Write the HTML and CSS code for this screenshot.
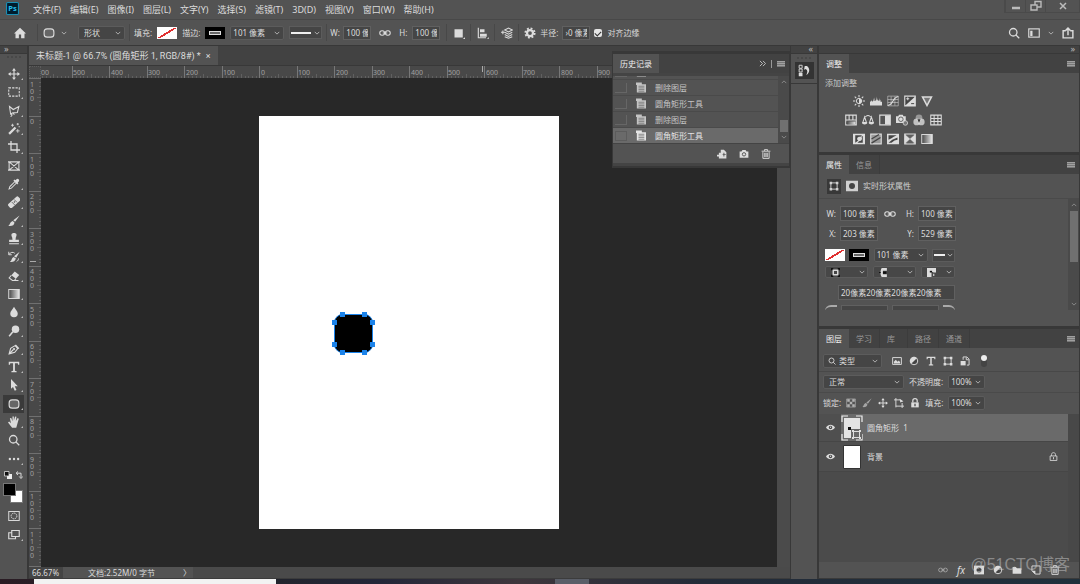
FILE: index.html
```html
<!DOCTYPE html>
<html lang="zh-CN">
<head>
<meta charset="utf-8">
<title>未标题-1 @ 66.7%</title>
<link rel="stylesheet" href="styles.css">
</head>
<body>
<svg class="sprite" aria-hidden="true">
  <symbol id="home" viewBox="0 0 16 16"><path fill="currentColor" d="M8 1 0 8.500h2V15h4.500v-5h3v5H14V8.500h2z"/></symbol>
  <symbol id="rrect" viewBox="0 0 16 16"><rect x="1.500" y="2.500" width="13" height="11" rx="4" fill="#666" stroke="currentColor" stroke-width="1.500"/></symbol>
  <symbol id="chev" viewBox="0 0 8 8"><path d="M1 2.500 4 5.500 7 2.500" fill="none" stroke="currentColor" stroke-width="1.300"/></symbol>
  <symbol id="link" viewBox="0 0 16 16"><g fill="none" stroke="currentColor" stroke-width="1.400"><rect x="1" y="5" width="6.500" height="6" rx="3"/><rect x="8.500" y="5" width="6.500" height="6" rx="3"/><path d="M5 8h6"/></g></symbol>
  <symbol id="square" viewBox="0 0 16 16"><path fill="currentColor" d="M2 3h11v11H2zM13 16l3-2.500V16z"/></symbol>
  <symbol id="align" viewBox="0 0 16 16"><path fill="currentColor" d="M1 1h1.500v14H1zM4 3h6v4H4zM4 9h9v4H4zM1 13.500h11V15H1zM13 15.500l3-2v2z"/></symbol>
  <symbol id="stack" viewBox="0 0 16 16"><g fill="none" stroke="currentColor" stroke-width="1.400"><path d="M5 4l5-2.500L15 4l-5 2.500zM5 7l5 2.500L15 7M5 10l5 2.500 5-2.500M5 13l5 2 5-2M0 7h5M2.500 4.500v5"/></g></symbol>
  <symbol id="gear" viewBox="0 0 16 16"><circle cx="8" cy="8" r="4" fill="none" stroke="currentColor" stroke-width="3"/><circle cx="8" cy="8" r="6.200" fill="none" stroke="currentColor" stroke-width="2.500" stroke-dasharray="2.500 2.370"/></symbol>
  <symbol id="search" viewBox="0 0 16 16"><g fill="none" stroke="currentColor" stroke-width="1.700"><circle cx="7" cy="7" r="5"/><path d="M10.500 10.500 15 15"/></g></symbol>
  <symbol id="work" viewBox="0 0 16 16"><rect x="1" y="2.500" width="14" height="11" fill="none" stroke="currentColor" stroke-width="1.500"/><path fill="currentColor" d="M3 5h3v7H3z"/></symbol>
  <symbol id="share" viewBox="0 0 16 16"><path d="M5 5H1.500v9.500h13V5H11M8 11V2M5 4.500 8 1.500l3 3" fill="none" stroke="currentColor" stroke-width="1.900"/></symbol>
  <symbol id="menu" viewBox="0 0 8 8"><path fill="#777" d="M0 1h8v6H0z"/><path fill="currentColor" d="M0 1h8v1H0zM0 3h8v1H0zM0 5h8v1H0z"/></symbol>
  <symbol id="move" viewBox="0 0 16 16"><path d="M8 2v12M2 8h12" stroke="currentColor" stroke-width="1.500"/><path fill="currentColor" d="M8 0l2.600 3.500H5.400zM8 16l2.600-3.500H5.400zM0 8l3.500-2.600v5.200zM16 8l-3.500-2.600v5.200z"/></symbol>
  <symbol id="marquee" viewBox="0 0 16 16"><rect x="1" y="2.500" width="14" height="11" fill="none" stroke="currentColor" stroke-width="1.400" stroke-dasharray="3 1.500"/></symbol>
  <symbol id="lasso" viewBox="0 0 16 16"><path d="M2 2l5 4 7.500-4-2 8-6 .500-3 1.500zM3.500 12c2.500 0 2.500 2 0 3.500M6.500 10.500l2 2.500" fill="none" stroke="currentColor" stroke-width="1.400"/></symbol>
  <symbol id="wand" viewBox="0 0 16 16"><path d="M1.500 14.500 10 6" stroke="currentColor" stroke-width="3"/><path d="M6 1v4M4 3h4M13 0v3M11.500 1.500h3M13 8v5M10.500 10.500h5M14 5h2" stroke="currentColor" stroke-width="1.100"/></symbol>
  <symbol id="crop" viewBox="0 0 16 16"><path d="M4 0v12h12M0 4h12v12" fill="none" stroke="currentColor" stroke-width="1.700"/></symbol>
  <symbol id="frame" viewBox="0 0 16 16"><path d="M1.500 2.500h13v11h-13zM1.500 2.500l13 11M14.500 2.500l-13 11M0 2.500h16M0 13.500h16" fill="none" stroke="currentColor" stroke-width="1.400"/></symbol>
  <symbol id="dropper" viewBox="0 0 16 16"><path fill="currentColor" d="M10 3l1-1c2-2.500 5.500 1 3 3l-1 1 .800 1-1.600 1.600-5-5L8.800 2z"/><path d="M9 5 2.500 11.500 1.500 14.500l3-1L11 7" fill="none" stroke="currentColor" stroke-width="1.400"/></symbol>
  <symbol id="heal" viewBox="0 0 16 16"><rect x="-1" y="5" width="18" height="7" rx="2" transform="rotate(-42 8 8)" fill="currentColor"/><path d="M5 8l4 4M8 4.500l4 4" stroke="#535353"/><circle cx="8.500" cy="8" r="1" fill="#535353"/></symbol>
  <symbol id="brush" viewBox="0 0 16 16"><path fill="currentColor" d="M15.500.500 9.500 9 7 7zM6.300 8l2.300 2c0 4-3.600 5-8.100 4.500 2.500-1.500 2-5.500 5.800-6.500z"/></symbol>
  <symbol id="stamp" viewBox="0 0 16 16"><path fill="currentColor" d="M8 0c4 0 4 3 2.500 5.500L10 9h4.500v3h-13V9H6l-.500-3.500C4 3 4 0 8 0zM1.500 13.500h13V15h-13z"/></symbol>
  <symbol id="hbrush" viewBox="0 0 16 16"><path fill="currentColor" d="M15.500 1 11 9 8 7zM7.500 8l3 2c-1 4-4 5-8 4.500 3-1.500 2-5.500 5-6.500z"/><path d="M1 1v4h4M1.500 4.500C3 1.500 7 1 9 3M14 10c0 2-1 3-2.500 4" fill="none" stroke="currentColor" stroke-width="1.300"/></symbol>
  <symbol id="eraser" viewBox="0 0 16 16"><path fill="currentColor" d="M9 2l6 4.500-4.500 5-6-4.500z"/><path d="M4.500 7 1.500 10.500 6 14h2.500l2-2.500M5 14h9" fill="none" stroke="currentColor" stroke-width="1.400"/></symbol>
  <linearGradient id="fade"><stop offset="0" stop-color="#444"/><stop offset="1" stop-color="#e8e8e8"/></linearGradient>
  <symbol id="grad" viewBox="0 0 16 16"><rect x="1" y="2" width="14" height="12" fill="url(#fade)" stroke="currentColor" stroke-width="1.300"/></symbol>
  <symbol id="drop" viewBox="0 0 16 16"><path fill="currentColor" d="M8 1c1.500 3 5 6 5 9a5 5 0 0 1-10 0c0-3 3.500-6 5-9z"/></symbol>
  <symbol id="dodge" viewBox="0 0 16 16"><circle cx="10" cy="5.500" r="5" fill="currentColor"/><path d="M6.500 9 1.500 15" stroke="currentColor" stroke-width="2"/></symbol>
  <symbol id="pen" viewBox="0 0 16 16"><path d="M1.500 14.500 3.500 7l6-3.500 3.500 4L9 12.500zM1.500 14.500 7 9M10 2.500l4.500 5" fill="none" stroke="currentColor" stroke-width="1.500"/><circle cx="8" cy="8" r="1.500" fill="currentColor"/></symbol>
  <symbol id="type" viewBox="0 0 16 16"><path fill="currentColor" d="M1 1h14v4h-1.500L13 3H9.200v10l2.300.700V15h-7v-1.300l2.300-.700V3H3l-.500 2H1z"/></symbol>
  <symbol id="arrow" viewBox="0 0 16 16"><path fill="currentColor" d="M4 0l9 9.500H9l2.300 5-2.300 1-2.300-5L4 13z"/></symbol>
  <symbol id="hand" viewBox="0 0 16 16"><path fill="currentColor" d="M5.500 15.500 0 8.500l1.500-1.200L4 9.500 2.500 3 4.300 2.500 6 7V.500h1.800V6L9.500.700l1.700.4-.7 5.600 2.300-4 1.600.8-1.700 6-1.700 6z"/></symbol>
  <symbol id="dots" viewBox="0 0 16 16"><g fill="currentColor"><circle cx="2.500" cy="8" r="1.600"/><circle cx="8" cy="8" r="1.600"/><circle cx="13.500" cy="8" r="1.600"/></g></symbol>
  <symbol id="defcol" viewBox="0 0 8 8"><path fill="#eee" d="M3 3h5v5H3z"/><path fill="#111" stroke="#ddd" stroke-width=".8" d="M.5.500h4.500v4.500H.5z"/></symbol>
  <symbol id="swap" viewBox="0 0 8 8"><path fill="none" stroke="currentColor" d="M2 2.200h4v4M3 .5 1 2.200 3 4M4.300 5.500 6 7.500l1.700-2"/></symbol>
  <symbol id="mask" viewBox="0 0 16 16"><rect x="1" y="2" width="14" height="12" fill="none" stroke="currentColor" stroke-width="1.300"/><circle cx="8" cy="8" r="3.800" fill="none" stroke="currentColor" stroke-width="1.300" stroke-dasharray="2 .8"/></symbol>
  <symbol id="screen" viewBox="0 0 16 16"><path d="M5 2h10v8H5zM5 5H1v8h9v-3" fill="none" stroke="currentColor" stroke-width="1.500"/></symbol>
  <symbol id="doc" viewBox="0 0 12 12"><path fill="currentColor" d="M0 0h7v2h5v10H1V3H0z"/><path d="M3 4.500h7M3 6.500h7M3 8.500h7M3 10.500h7" stroke="#777"/></symbol>
  <symbol id="newdoc" viewBox="0 0 16 16"><path fill="currentColor" d="M6 1h5l4 4v10H5V9h1zM0 9h3V6h3v3h3v3H6v3H3v-3H0z"/><path fill="#535353" d="M9 8h1.300V6h1.500v2H14v1.300h-2.200V12h-1.500V9.300H9z"/></symbol>
  <symbol id="camera" viewBox="0 0 16 16"><path fill="currentColor" d="M1 4h3l1.500-2.500h5L12 4h3v10H1z"/><circle cx="8" cy="8.500" r="2.700" fill="none" stroke="#535353" stroke-width="1.500"/></symbol>
  <symbol id="trash" viewBox="0 0 16 16"><path fill="none" stroke="currentColor" stroke-width="1.500" d="M3 5v10h10V5M1 3.500h14M5.500 3V1h5v2M6 6v7M8 6v7M10 6v7"/></symbol>
  <symbol id="history" viewBox="0 0 16 16"><path fill="none" stroke="currentColor" stroke-width="1.200" d="M1.500 1h4v4h-4zM1.500 6h4v4h-4z"/><path fill="currentColor" d="M1 11h5v4.500H1zM9 2h3c5 4 3 10-1 12 2-4 2-7-1-8L8 7z"/></symbol>
  <symbol id="bright" viewBox="0 0 16 16"><circle cx="8" cy="8" r="3.500" fill="none" stroke="currentColor" stroke-width="1.300"/><path fill="currentColor" d="M8 4.500a3.500 3.500 0 0 1 0 7z"/><path stroke="currentColor" stroke-width="1.400" d="M8 0v3M8 13v3M0 8h3M13 8h3M2.300 2.300l2 2M11.700 11.700l2 2M2.300 13.700l2-2M11.700 4.300l2-2"/></symbol>
  <symbol id="levels" viewBox="0 0 16 16"><path fill="currentColor" d="M0 14V9l2-1V6l1 3 1-1V4l1 4 1 0V3l1 5 1-1V2l1 5h1V4l1 4 1-1V4l1 4 1-2v3l2 0v5z"/></symbol>
  <symbol id="curves" viewBox="0 0 16 16"><path d="M1 1.500h14v13H1zM1 6h14M1 10h14M5.500 2v12M10.500 2v12" fill="none" stroke="currentColor" opacity=".7"/><path d="M1 14C9 13 7 3 15 2" fill="none" stroke="currentColor" stroke-width="1.500"/></symbol>
  <symbol id="expo" viewBox="0 0 16 16"><path fill="#444" stroke="currentColor" stroke-width="1.500" d="M1 1.500h14v13H1z"/><path fill="currentColor" d="M15 2v12.500H1z"/><path stroke="currentColor" stroke-width="1.300" d="M3 5h4M5 3v4"/><path stroke="#444" stroke-width="1.300" d="M9.500 11.500h4"/></symbol>
  <symbol id="vib" viewBox="0 0 16 16"><path fill="#777" stroke="currentColor" stroke-width="2" d="M2 2.500h12L8 14z"/></symbol>
  <symbol id="hue" viewBox="0 0 16 16"><path fill="none" stroke="currentColor" stroke-width="1.500" d="M1 1.500h14v13H1zM1 8h14M5.500 2v6M10.500 2v6"/><path fill="url(#fade)" d="M2 10h12v4H2z"/></symbol>
  <symbol id="scale" viewBox="0 0 16 16"><path fill="none" stroke="currentColor" stroke-width="1.400" d="M3 4c3 0 2-2 5-2s2 2 5 2M3.500 4 1 11.500h5zM12.500 4 10 11.500h5z"/><path fill="currentColor" d="M0 11h7c0 4-7 4-7 0zM9 11h7c0 4-7 4-7 0z"/></symbol>
  <symbol id="bw" viewBox="0 0 16 16"><path fill="none" stroke="currentColor" stroke-width="1.500" d="M1 1.500h14v13H1z"/><path fill="currentColor" d="M8 2h7v12H8z"/></symbol>
  <symbol id="photo" viewBox="0 0 16 16"><path fill="currentColor" d="M0 3h3l1-2h5l1 2h3v9H0z"/><circle cx="6.500" cy="7" r="3" fill="none" stroke="#444"/><circle cx="12.500" cy="12" r="3" fill="#777" stroke="currentColor"/></symbol>
  <symbol id="mixer" viewBox="0 0 16 16"><g fill="currentColor"><circle cx="8" cy="5" r="4.500" opacity=".5"/><circle cx="5" cy="10.500" r="4.500" opacity=".8"/><circle cx="11" cy="10.500" r="4.500" opacity=".8"/></g><path fill="#333" d="M6 7h4l-2 5z"/></symbol>
  <symbol id="grid" viewBox="0 0 16 16"><path fill="none" stroke="currentColor" stroke-width="1.400" d="M1 1.500h14v13H1zM1 6h14M1 10h14M5.500 2v12M10.500 2v12"/></symbol>
  <symbol id="invert" viewBox="0 0 16 16"><path fill="currentColor" d="M0 1h16v14H0z"/><path fill="#444" d="M3 3h9l-2 2C6 4 4 8 7 10l-4 3zM13 13H6l2-2c4 0 5-4 3-6l2-1z"/></symbol>
  <symbol id="poster" viewBox="0 0 16 16"><path fill="#999" stroke="currentColor" stroke-width="1.500" d="M1 1.500h14v13H1z"/><path stroke="#444" stroke-width="1.800" d="M2 8l10-6M2 13.500 14 6"/></symbol>
  <symbol id="thresh" viewBox="0 0 16 16"><path fill="currentColor" d="M0 1h16v14H0z"/><path fill="#444" d="M2 3h11L9 5 6 7 2 9zM14 6v3l-4 1-4 3H2l5-4z"/></symbol>
  <symbol id="select" viewBox="0 0 16 16"><path fill="#888" stroke="currentColor" stroke-width="1.500" d="M1 1.500h14v13H1z"/><path fill="#444" d="M2 2l6 5 6-5zM8 8l-5 6h10z" opacity=".6"/><path fill="currentColor" d="M1 2l7 6-7 6zM15 2 8 8l7 6z"/></symbol>
  <symbol id="box" viewBox="0 0 16 16"><path fill="none" stroke="currentColor" stroke-width="1.500" d="M3 3h10v10H3z"/><path fill="currentColor" d="M1 1h4v4H1zM11 1h4v4h-4zM1 11h4v4H1zM11 11h4v4h-4z"/></symbol>
  <symbol id="fmask" viewBox="0 0 16 16"><path fill="currentColor" d="M0 1h16v14H0z"/><circle cx="8" cy="8" r="4" fill="#444"/></symbol>
  <symbol id="salign" viewBox="0 0 16 16"><path fill="#111" d="M0 0h4v4H0zM12 0h4v4h-4zM0 12h4v4H0zM12 12h4v4h-4z"/><rect x="4" y="4" width="8" height="8" fill="#444" stroke="currentColor" stroke-width="2.500"/></symbol>
  <symbol id="cap" viewBox="0 0 16 16"><path fill="currentColor" d="M5 0h9v5H7v6h7v5H5c-3-2-3-13 0-16z"/><path fill="#111" d="M7 6h6v4H7zM0 7h3v2H0z"/></symbol>
  <symbol id="corner" viewBox="0 0 16 16"><path fill="currentColor" d="M0 0h16v8h-5V7H8v9H0z"/><path fill="#111" d="M5 5h4v3H5z"/><path stroke="currentColor" stroke-width="2" d="M12 10v4"/></symbol>
  <symbol id="picture" viewBox="0 0 16 16"><path fill="none" stroke="currentColor" stroke-width="1.500" d="M1 2.500h14v11H1z"/><path fill="currentColor" d="M3 12V9l3-3 3 3 2-2 2 3v2z"/></symbol>
  <symbol id="half" viewBox="0 0 16 16"><circle cx="8" cy="8" r="6" fill="#444" stroke="currentColor" stroke-width="1.500"/><path fill="currentColor" d="M3.500 12.500A6 6 0 0 1 12.500 3.500z"/></symbol>
  <symbol id="smart" viewBox="0 0 16 16"><path fill="none" stroke="currentColor" stroke-width="1.500" d="M5 6V1.500h6L14.500 5v9.500H11M10 2v4h4"/><path fill="currentColor" d="M1 8h8v7H1z"/></symbol>
  <symbol id="check" viewBox="0 0 16 16"><path fill="none" stroke="currentColor" opacity=".7" d="M1 1.500h14v13H1z"/><path fill="currentColor" opacity=".7" d="M2 2h4v4H2zM10 2h4v4h-4zM6 6h4v4H6zM2 10h4v4H2zM10 10h4v4h-4z"/></symbol>
  <symbol id="artb" viewBox="0 0 16 16"><path fill="none" stroke="currentColor" stroke-width="1.500" d="M3 0v15M0 3h10M13 8v8M3 13h13M10 3l3 3"/><path fill="currentColor" d="M9 1l6 4-5 2z"/></symbol>
  <symbol id="lock" viewBox="0 0 16 16"><path fill="currentColor" d="M2 7h12v8H2z"/><path fill="none" stroke="currentColor" stroke-width="2" d="M4.500 7V4.500C4.500 0 11.500 0 11.500 4.500V7"/><path fill="#444" d="M7 9h2v4H7z"/></symbol>
  <symbol id="olock" viewBox="0 0 16 16"><path fill="none" stroke="currentColor" stroke-width="1.500" d="M2 7h12v8H2zM4.500 7V4.500C4.500 0 11.500 0 11.500 4.500V7M8 9v4"/></symbol>
  <symbol id="eye" viewBox="0 0 16 16"><path fill="currentColor" d="M0 8c4-6.500 12-6.500 16 0-4 6.500-12 6.500-16 0z"/><circle cx="8" cy="8" r="3" fill="#444"/><circle cx="8" cy="7.500" r="1.200" fill="currentColor"/></symbol>
  <symbol id="folder" viewBox="0 0 16 16"><path fill="currentColor" d="M1 3h5l2 2h7v9H1z"/></symbol>
  <symbol id="newl" viewBox="0 0 16 16"><path fill="none" stroke="currentColor" stroke-width="1.500" d="M7 14.500h7.500v-13h-13V9z"/><path fill="currentColor" d="M1 9h6v6z"/></symbol>
</svg>

<header class="menubar">
  <svg class="logo" viewBox="0 0 12 12" role="img" aria-label="Ps"><rect x=".5" y=".5" width="11" height="11" rx="1" fill="#001d2e" stroke="#1a8fb5"/><text x="6" y="8.500" text-anchor="middle">Ps</text></svg>
  <nav>
    <a href="#">文件(F)</a><a href="#">编辑(E)</a><a href="#">图像(I)</a><a href="#">图层(L)</a><a href="#">文字(Y)</a><a href="#">选择(S)</a><a href="#">滤镜(T)</a><a href="#">3D(D)</a><a href="#">视图(V)</a><a href="#">窗口(W)</a><a href="#">帮助(H)</a>
  </nav>
  <div class="winctl">
    <button aria-label="最小化"><svg viewBox="0 0 12 12"><path d="M2 8h8" stroke="#bbb" stroke-width="2.500"/></svg></button>
    <button aria-label="还原"><svg viewBox="0 0 12 12"><path d="M1 5h6v5H1zM5 5V1.500h6V7H7" fill="none" stroke="#bbb" stroke-width="1.400"/></svg></button>
    <button aria-label="关闭"><svg viewBox="0 0 12 12"><path d="M3 3l6 6M9 3 3 9" stroke="#bbb" stroke-width="1.500"/></svg></button>
  </div>
</header>

<div class="options">
  <div class="group home"><button aria-label="主页"><svg class="i"><use href="#home"/></svg></button></div>
  <div class="group shape">
    <button aria-label="圆角矩形工具"><svg class="i"><use href="#rrect"/></svg></button>
    <svg class="c"><use href="#chev"/></svg>
    <label class="drop mode"><select aria-label="模式"><option>形状</option></select><svg class="c"><use href="#chev"/></svg></label>
  </div>
  <div class="group paint">
    <span class="lab">填充:</span><button class="sw none" aria-label="填充"></button>
    <span class="lab">描边:</span><button class="sw stroke" aria-label="描边"></button>
    <label class="drop size"><input value="101 像素" aria-label="描边宽度"><svg class="c"><use href="#chev"/></svg></label>
    <button class="linebtn" aria-label="描边类型"><i></i><svg class="c"><use href="#chev"/></svg></button>
  </div>
  <div class="group dims">
    <label for="ow">W:</label><input id="ow" class="clip" value="100 像素">
    <button class="lk" aria-label="链接"><svg class="i"><use href="#link"/></svg></button>
    <label for="oh">H:</label><input id="oh" class="clip" value="100 像素">
  </div>
  <div class="group one"><button aria-label="路径操作"><svg class="i"><use href="#square"/></svg></button></div>
  <div class="group one"><button aria-label="对齐"><svg class="i"><use href="#align"/></svg></button></div>
  <div class="group one"><button aria-label="排列"><svg class="i"><use href="#stack"/></svg></button></div>
  <div class="group rad">
    <button aria-label="设置"><svg class="i"><use href="#gear"/></svg></button>
    <label for="or">半径:</label><input id="or" class="clip" value="›0 像素">
    <label class="chk"><input type="checkbox" checked>对齐边缘</label>
  </div>
  <div class="optright">
    <button aria-label="搜索"><svg class="i"><use href="#search"/></svg></button>
    <button aria-label="工作区"><svg class="i"><use href="#work"/></svg></button>
    <svg class="c"><use href="#chev"/></svg>
    <button aria-label="共享"><svg class="i"><use href="#share"/></svg></button>
  </div>
</div>

<main class="workspace">
  <aside class="tools">
    <div class="strip">»</div>
    <div class="grip"></div>
    <div class="toollist">
      <button aria-label="移动"><svg class="i"><use href="#move"/></svg></button>
      <button aria-label="选框"><svg class="i"><use href="#marquee"/></svg></button>
      <button aria-label="套索"><svg class="i"><use href="#lasso"/></svg></button>
      <button aria-label="魔棒"><svg class="i"><use href="#wand"/></svg></button>
      <button aria-label="裁剪"><svg class="i"><use href="#crop"/></svg></button>
      <button aria-label="图框" class="solo"><svg class="i"><use href="#frame"/></svg></button>
      <button aria-label="吸管"><svg class="i"><use href="#dropper"/></svg></button>
      <button aria-label="修复"><svg class="i"><use href="#heal"/></svg></button>
      <button aria-label="画笔"><svg class="i"><use href="#brush"/></svg></button>
      <button aria-label="图章"><svg class="i"><use href="#stamp"/></svg></button>
      <button aria-label="历史画笔"><svg class="i"><use href="#hbrush"/></svg></button>
      <button aria-label="橡皮擦"><svg class="i"><use href="#eraser"/></svg></button>
      <button aria-label="渐变"><svg class="i"><use href="#grad"/></svg></button>
      <button aria-label="模糊"><svg class="i"><use href="#drop"/></svg></button>
      <button aria-label="减淡"><svg class="i"><use href="#dodge"/></svg></button>
      <button aria-label="钢笔"><svg class="i"><use href="#pen"/></svg></button>
      <button aria-label="文字"><svg class="i"><use href="#type"/></svg></button>
      <button aria-label="路径选择"><svg class="i"><use href="#arrow"/></svg></button>
      <button aria-label="圆角矩形" class="on"><svg class="i"><use href="#rrect"/></svg></button>
      <button aria-label="抓手"><svg class="i"><use href="#hand"/></svg></button>
      <button aria-label="缩放" class="solo"><svg class="i"><use href="#search"/></svg></button>
      <button aria-label="更多"><svg class="i"><use href="#dots"/></svg></button>
    </div>
    <div class="mini"><svg><use href="#defcol"/></svg><svg><use href="#swap"/></svg></div>
    <div class="colors"><button class="bg" aria-label="背景色"></button><button class="fg" aria-label="前景色"></button></div>
    <div class="modes">
      <button class="solo" aria-label="快速蒙版"><svg class="i"><use href="#mask"/></svg></button>
      <button aria-label="屏幕模式"><svg class="i"><use href="#screen"/></svg></button>
    </div>
  </aside>

  <section class="document">
    <div class="tabs"><div class="tab">未标题-1 @ 66.7% (圆角矩形 1, RGB/8#) *<button aria-label="关闭">×</button></div></div>
    <div class="view">
      <div class="corner"></div>
      <svg class="hruler" aria-hidden="true">
        <pattern id="ht" x="31" width="75" height="12" patternUnits="userSpaceOnUse"><path d="M.5 0v12M37.500 0v12" stroke="#777"/><path d="M4.500 10v2M8.500 10v2M11.500 10v2M15.500 10v2M19.500 8v4M23.500 10v2M26.500 10v2M30.500 10v2M34.500 10v2M41.500 10v2M45.500 10v2M49.500 10v2M53.500 10v2M56.500 8v4M60.500 10v2M64.500 10v2M68.500 10v2M71.500 10v2" stroke="#606060"/></pattern>
        <rect width="100%" height="12" fill="url(#ht)"/>
        <path d="M441.500 0v6" stroke="#aaa"/>
        <text x="0" y="9">00</text><text x="32" y="9">500</text><text x="70" y="9">400</text><text x="107" y="9">300</text><text x="145" y="9">200</text><text x="182" y="9">100</text><text x="220" y="9">0</text><text x="257" y="9">100</text><text x="295" y="9">200</text><text x="332" y="9">300</text><text x="370" y="9">400</text><text x="407" y="9">500</text><text x="445" y="9">600</text><text x="482" y="9">700</text><text x="520" y="9">800</text><text x="557" y="9">900</text>
      </svg>
      <svg class="vruler" aria-hidden="true">
        <pattern id="vt" y="38" width="12" height="75" patternUnits="userSpaceOnUse"><path d="M0 .5h12M0 37.500h12" stroke="#707070"/><path d="M10 4.500h2M10 8.500h2M10 11.500h2M10 15.500h2M8 19.500h4M10 23.500h2M10 26.500h2M10 30.500h2M10 34.500h2M10 41.500h2M10 45.500h2M10 49.500h2M10 53.500h2M8 56.500h4M10 60.500h2M10 64.500h2M10 68.500h2M10 71.500h2" stroke="#606060"/></pattern>
        <rect width="12" height="100%" fill="url(#vt)"/>
        <path d="M1 183.500h6" stroke="#aaa"/>
        <text y="9"><tspan x="1">1</tspan><tspan x="1" dy="7">0</tspan><tspan x="1" dy="7">0</tspan></text>
        <text y="46"><tspan x="1">0</tspan></text>
        <text y="84"><tspan x="1">1</tspan><tspan x="1" dy="7">0</tspan><tspan x="1" dy="7">0</tspan></text>
        <text y="121"><tspan x="1">2</tspan><tspan x="1" dy="7">0</tspan><tspan x="1" dy="7">0</tspan></text>
        <text y="159"><tspan x="1">3</tspan><tspan x="1" dy="7">0</tspan><tspan x="1" dy="7">0</tspan></text>
        <text y="196"><tspan x="1">4</tspan><tspan x="1" dy="7">0</tspan><tspan x="1" dy="7">0</tspan></text>
        <text y="234"><tspan x="1">5</tspan><tspan x="1" dy="7">0</tspan><tspan x="1" dy="7">0</tspan></text>
        <text y="271"><tspan x="1">6</tspan><tspan x="1" dy="7">0</tspan><tspan x="1" dy="7">0</tspan></text>
        <text y="309"><tspan x="1">7</tspan><tspan x="1" dy="7">0</tspan><tspan x="1" dy="7">0</tspan></text>
        <text y="346"><tspan x="1">8</tspan><tspan x="1" dy="7">0</tspan><tspan x="1" dy="7">0</tspan></text>
        <text y="384"><tspan x="1">9</tspan><tspan x="1" dy="7">0</tspan><tspan x="1" dy="7">0</tspan></text>
        <text y="421"><tspan x="1">1</tspan><tspan x="1" dy="7">0</tspan><tspan x="1" dy="7">0</tspan><tspan x="1" dy="7">0</tspan></text>
        <text y="459"><tspan x="1">1</tspan><tspan x="1" dy="7">1</tspan><tspan x="1" dy="7">0</tspan><tspan x="1" dy="7">0</tspan></text>
      </svg>
      <div class="canvas">
        <svg class="page" viewBox="0 0 300 413">
          <rect width="300" height="413" fill="#fff"/>
          <rect x="75.500" y="198.500" width="38" height="38" rx="8" fill="#000" stroke="#1b83ea"/>
          <path d="M83 199h24l6 6v24l-7 7H83l-7-7v-24z" fill="#000"/>
          <path fill="#1b83ea" d="M81 196h5v5h-5zM103 196h5v5h-5zM73 204h5v5h-5zM111 204h5v5h-5zM73 226h5v5h-5zM111 226h5v5h-5zM81 234h5v5h-5zM103 234h5v5h-5z"/>
        </svg>
      </div>
      <div class="vscroll"></div>
    </div>
    <div class="status"><span class="zoom">66.67%</span><span class="docsize">文档:2.52M/0 字节</span><span class="more">〉</span></div>

    <section class="histpanel">
      <div class="phead"><h2 class="ptab on">历史记录</h2><span class="fill"></span><svg class="dbl" viewBox="0 0 8 8"><path d="M1 1l3 3-3 3M4.500 1l3 3-3 3" fill="none" stroke="currentColor"/></svg><i class="bar"></i><svg class="m"><use href="#menu"/></svg></div>
      <div class="hbody">
        <ul>
          <li class="cut"><i></i><svg><use href="#doc"/></svg></li>
          <li><i></i><svg><use href="#doc"/></svg>删除图层</li>
          <li><i></i><svg><use href="#doc"/></svg>圆角矩形工具</li>
          <li><i></i><svg><use href="#doc"/></svg>删除图层</li>
          <li class="on"><i></i><svg><use href="#doc"/></svg>圆角矩形工具</li>
        </ul>
        <div class="sbar"><svg class="c up"><use href="#chev"/></svg><b></b><svg class="c"><use href="#chev"/></svg></div>
      </div>
      <div class="hfoot"><button aria-label="新建文档"><svg><use href="#newdoc"/></svg></button><button aria-label="快照"><svg><use href="#camera"/></svg></button><button aria-label="删除"><svg><use href="#trash"/></svg></button></div>
    </section>
  </section>

  <aside class="dock">
    <div class="strip">«</div>
    <div class="dockbox"><span class="grip"></span><button aria-label="历史记录"><svg><use href="#history"/></svg></button></div>
    <div class="dockrest"></div>
  </aside>

  <aside class="panels">
    <div class="strip">»</div>
    <section class="adjust">
      <div class="phead"><h2 class="ptab on">调整</h2><span class="fill"></span><svg class="m"><use href="#menu"/></svg></div>
      <div class="abody">
        <p>添加调整</p>
        <div class="arow"><svg class="i"><use href="#bright"/></svg><svg class="i"><use href="#levels"/></svg><svg class="i"><use href="#curves"/></svg><svg class="i"><use href="#expo"/></svg><svg class="i"><use href="#vib"/></svg></div>
        <div class="arow"><svg class="i"><use href="#hue"/></svg><svg class="i"><use href="#scale"/></svg><svg class="i"><use href="#bw"/></svg><svg class="i"><use href="#photo"/></svg><svg class="i"><use href="#mixer"/></svg><svg class="i"><use href="#grid"/></svg></div>
        <div class="arow"><svg class="i"><use href="#invert"/></svg><svg class="i"><use href="#poster"/></svg><svg class="i"><use href="#thresh"/></svg><svg class="i"><use href="#select"/></svg><svg class="i"><use href="#grad"/></svg></div>
      </div>
    </section>

    <section class="props">
      <div class="phead"><h2 class="ptab on">属性</h2><h2 class="ptab">信息</h2><span class="fill"></span><svg class="m"><use href="#menu"/></svg></div>
      <div class="ptitle"><span class="boxed"><svg><use href="#box"/></svg></span><svg class="i"><use href="#fmask"/></svg><span>实时形状属性</span></div>
      <div class="pscroll">
        <div class="pbody">
          <div class="dimgrid">
            <label for="pw">W:</label><input id="pw" value="100 像素"><svg class="i"><use href="#link"/></svg><label for="ph">H:</label><input id="ph" value="100 像素">
            <label for="px">X:</label><input id="px" value="203 像素"><span></span><label for="py">Y:</label><input id="py" value="529 像素">
          </div>
          <div class="prow strokes"><button class="sw none" aria-label="填充"></button><button class="sw stroke" aria-label="描边"></button>
            <label class="drop size"><input value="101 像素" aria-label="描边宽度"><svg class="c"><use href="#chev"/></svg></label>
            <button class="linebtn" aria-label="描边类型"><i></i><svg class="c"><use href="#chev"/></svg></button></div>
          <div class="prow icons"><button class="ib" aria-label="对齐"><svg><use href="#salign"/></svg><svg class="c"><use href="#chev"/></svg></button><button class="ib" aria-label="端点"><svg><use href="#cap"/></svg><svg class="c"><use href="#chev"/></svg></button><button class="ib last" aria-label="角点"><svg><use href="#corner"/></svg><svg class="c"><use href="#chev"/></svg></button></div>
          <div class="prow radii"><input aria-label="半径" value="20像素20像素20像素20像素"></div>
          <div class="prow cutrow"><i class="arc l"></i><span></span><span></span><i class="arc r"></i></div>
        </div>
        <div class="sbar"><svg class="c up"><use href="#chev"/></svg><b></b><svg class="c"><use href="#chev"/></svg></div>
      </div>
    </section>

    <section class="layers">
      <div class="phead"><h2 class="ptab on">图层</h2><h2 class="ptab">学习</h2><h2 class="ptab lib">库</h2><h2 class="ptab">路径</h2><h2 class="ptab">通道</h2><span class="fill"></span><svg class="m"><use href="#menu"/></svg></div>
      <div class="lrow filter">
        <label class="drop kind"><svg class="mag"><use href="#search"/></svg><select aria-label="过滤"><option>类型</option></select><svg class="c"><use href="#chev"/></svg></label>
        <div class="ficons"><svg><use href="#picture"/></svg><svg><use href="#half"/></svg><svg><use href="#type"/></svg><svg><use href="#box"/></svg><svg><use href="#smart"/></svg></div>
        <button class="toggle" aria-label="过滤开关"></button>
      </div>
      <div class="lrow blend">
        <label class="drop bm"><select aria-label="混合模式"><option>正常</option></select><svg class="c"><use href="#chev"/></svg></label>
        <label for="op">不透明度:</label><span class="drop pct"><input id="op" value="100%"><svg class="c"><use href="#chev"/></svg></span>
      </div>
      <div class="lrow locks">
        <span class="lab">锁定:</span><div class="ficons"><svg><use href="#check"/></svg><svg class="dim"><use href="#brush"/></svg><svg><use href="#move"/></svg><svg><use href="#artb"/></svg><svg><use href="#lock"/></svg></div>
        <label for="fi">填充:</label><span class="drop pct"><input id="fi" value="100%"><svg class="c"><use href="#chev"/></svg></span>
      </div>
      <div class="lbody">
        <ul>
          <li class="on"><button aria-label="可见"><svg><use href="#eye"/></svg></button><div class="name"><svg class="thumb" viewBox="0 0 22 26"><path fill="#e4e4e4" d="M3 3h16v20H3z"/><path fill="#111" d="M7 12h3v3H7z"/><path d="M1 7V1h6M15 1h6v6M1 19v6h6M15 25h6v-6" fill="none" stroke="#eee" stroke-width="1.200"/><path fill="#666" d="M10 14h11v10H10z"/><rect x="12.500" y="16.500" width="6" height="6" fill="none" stroke="#ddd"/><path fill="#ddd" d="M11 15h2v2h-2zM18 15h2v2h-2zM11 22h2v2h-2zM18 22h2v2h-2z"/></svg>圆角矩形&nbsp; 1</div></li>
          <li><button aria-label="可见"><svg><use href="#eye"/></svg></button><div class="name"><svg class="thumb" viewBox="0 0 22 26"><path fill="#fff" stroke="#333" d="M2.500 1.500h17v23h-17z"/></svg>背景<svg class="olock"><use href="#olock"/></svg></div></li>
        </ul>
        <div class="gut"></div>
      </div>
      <div class="lfoot">
        <button class="dim" aria-label="链接图层"><svg><use href="#link"/></svg></button><button class="fx" aria-label="图层样式">fx</button><button aria-label="蒙版"><svg><use href="#fmask"/></svg></button><button aria-label="调整图层"><svg><use href="#half"/></svg></button><button aria-label="新建组"><svg><use href="#folder"/></svg></button><button aria-label="新建图层"><svg><use href="#newl"/></svg></button><button aria-label="删除"><svg><use href="#trash"/></svg></button>
        <span class="mark">@51CTO博客</span>
      </div>
    </section>
  </aside>
</main>
<footer class="taskbar"><span class="win"></span><span class="app"></span></footer>
</body>
</html>
```
FILE: styles.css
```css
* { box-sizing: border-box; }
html, body { height: 100%; }
body {
  margin: 0; display: flex; flex-direction: column; overflow: hidden;
  background: #535353; color: #dcdcdc;
  font: 8px/12px "Noto Sans", "Noto Sans CJK SC", sans-serif;
}
button, input, select { font: inherit; color: inherit; margin: 0; padding: 0; border: 0; background: none; min-width: 0; }
button { display: flex; align-items: center; justify-content: center; }
h2, p, ul { margin: 0; padding: 0; font: inherit; list-style: none; }
a { color: inherit; text-decoration: none; }
svg { display: block; flex: none; }
.sprite { position: absolute; width: 0; height: 0; }
.i { width: 12px; height: 12px; }
.c { width: 6px; height: 6px; color: #b0b0b0; }
.up { transform: scaleY(-1); }
.m { width: 8px; height: 8px; color: #a0a0a0; }
.fill { flex: 1; }
.dim { opacity: .6; }

.menubar { flex: none; display: flex; height: 20px; padding-left: 6px; border-bottom: 1px solid #484848; font-size: 9px; }
.logo { width: 13px; height: 13px; margin-top: 2px; }
.logo text { font: bold 7px "Noto Sans", sans-serif; fill: #26c0ee; }
.menubar nav { flex: 1; display: flex; gap: 9px; align-items: center; padding-left: 14px; white-space: nowrap; }
.winctl { display: flex; height: 13px; border: 1px solid #4a4a4a; border-top: 0; }
.winctl button { width: 20px; border-left: 1px solid #4a4a4a; }
.winctl button:last-child { width: 34px; }
.winctl svg { width: 12px; height: 12px; }

.options { flex: none; display: flex; align-items: center; height: 25px; white-space: nowrap; }
.group { display: flex; align-items: center; height: 17px; border-right: 1px solid #484848; flex: none; }
.home { padding: 0 11px 0 14px; }
.shape { padding: 0 4px 0 5px; gap: 6px; }
.mode { width: 47px; margin-left: 5px; }
.paint { padding: 0 4px; gap: 5px; }
.dims { padding: 0 6px 0 3px; gap: 4px; }
.dims label { width: 9px; }
.dims .lk { padding: 0 4px; }
.one { width: 24px; justify-content: center; }
.rad { padding-left: 5px; gap: 4px; border: 0; }
.clip { width: 28px; }
.options input:not([type]), .props input {
  height: 14px; padding: 0 2px; background: #454545; border: 1px solid #606060;
}
.drop { position: relative; display: flex; align-items: center; height: 14px; background: #454545; border: 1px solid #5c5c5c; border-radius: 2px; }
.drop select { appearance: none; width: 100%; height: 12px; line-height: 12px; padding-left: 5px; }
.drop > .c { position: absolute; right: 3px; top: 3px; }
.options .drop input, .props .drop input, .drop input { height: 12px; width: 100%; border: 0; padding: 0 0 0 2px; background: none; }
.size { width: 54px; }
.sw { width: 20px; height: 12px; border: 1px solid #fff; flex: none; }
.none { background: linear-gradient(148deg, #fff 45%, #e03030 45% 55%, #fff 55%); }
.stroke { border: 4px solid #000; background: #666; box-shadow: inset 0 0 0 1px #ddd; }
.linebtn { width: 33px; height: 13px; background: #454545; border: 1px solid #5c5c5c; gap: 3px; }
.linebtn i { width: 20px; height: 2px; background: #eee; }
.chk { display: flex; align-items: center; gap: 5px; }
.chk input { appearance: none; width: 8px; height: 8px; background: #e6e6e6; border-radius: 2px; display: grid; place-items: center; }
.chk input::after { content: ""; width: 5px; height: 3px; border: solid #333; border-width: 0 0 1px 1px; transform: rotate(-45deg); }
.optright { margin-left: auto; padding-right: 6px; display: flex; align-items: center; gap: 8px; }

.workspace { flex: 1; min-height: 0; display: flex; background: #383838; }
.strip { flex: none; height: 9px; background: #424242; border-top: 1px solid #383838; border-bottom: 1px solid #383838; font-size: 9px; line-height: 5px; color: #b8b8b8; text-align: right; padding-right: 4px; }
.tools { width: 27px; flex: none; display: flex; flex-direction: column; background: #535353; }
.tools .strip { text-align: left; padding-left: 4px; }
.grip { display: block; height: 3px; width: 14px; margin: 3px auto; border-top: 2px dotted #484848; }
.tools .grip { margin: 2px auto 6px; flex: none; }
.toollist { flex: none; height: 403px; display: flex; flex-direction: column; }
.toollist button, .modes button { flex: 1; position: relative; margin: 0 3px; }
.toollist button::after, .modes button::after { content: ""; position: absolute; right: 1px; bottom: 3px; border: 1px solid #bbb; border-top-color: transparent; border-left-color: transparent; }
.toollist .solo::after, .modes .solo::after { display: none; }
.toollist .on { background: #3a3a3a; }
.mini { flex: none; display: flex; justify-content: space-between; padding: 3px 4px 4px; }
.mini svg { width: 8px; height: 8px; }
.colors { flex: none; display: grid; grid-template: 7px 13px / 7px 13px; padding-left: 3px; height: 22px; }
.colors button { width: 13px; height: 13px; border: 1px solid #777; }
.fg { grid-area: 1 / 1; background: #000; }
.bg { grid-area: 2 / 2; background: #fff; }
.modes { flex: none; height: 37px; margin-top: 2px; display: flex; flex-direction: column; }

.document { position: relative; flex: 1; min-width: 0; display: flex; flex-direction: column; margin-left: 2px; }
.tabs { flex: none; height: 21px; display: flex; background: #424242; border-top: 1px solid #383838; border-bottom: 1px solid #383838; }
.tab { display: flex; align-items: center; gap: 5px; padding: 0 7px; background: #535353; font: 9px/12px Roboto, "Noto Sans CJK SC", sans-serif; white-space: nowrap; }
.view { flex: 1; min-height: 0; display: grid; grid-template: 12px minmax(0, 1fr) / 12px minmax(0, 1fr) 13px; background: #484848; }
.corner { border: 1px dotted #5c5c5c; }
.hruler { width: 100%; height: 12px; grid-column: 2 / 4; background: #484848; }
.vruler { width: 12px; height: 100%; background: #484848; overflow: hidden; }
.view text { fill: #a0a0a0; font: 7px "Noto Sans", sans-serif; }
.canvas { background: #282828; display: grid; place-items: center; overflow: hidden; }
.page { width: 300px; height: 413px; }
.vscroll { background: #4b4b4b; }
.status { flex: none; height: 12px; display: flex; background: #4a4a4a; border-bottom: 1px solid #3c3c3c; white-space: nowrap; }
.zoom { width: 34px; padding-left: 3px; background: #444; }
.docsize { width: 120px; padding-left: 25px; background: #535353; }
.more { width: 10px; background: #535353; line-height: 11px; }

.histpanel { position: absolute; right: 0; top: 6px; width: 178px; background: #535353; border: solid #383838; border-width: 3px 1px 2px; }
.phead { flex: none; height: 19px; display: flex; align-items: center; background: #424242; padding-right: 4px; }
.ptab { align-self: stretch; padding: 0 7px; line-height: 19px; color: #999; border-right: 1px solid #3c3c3c; }
.ptab.on { background: #535353; color: #eee; border: 0; }
.dbl { width: 7px; height: 7px; color: #ccc; }
.bar { width: 1px; height: 8px; margin: 0 5px; background: #999; }
.hbody { display: flex; height: 71px; border: solid #444; border-width: 3px 0 1px; overflow: hidden; }
.hbody ul { flex: 1; display: flex; flex-direction: column; justify-content: flex-end; }
.hbody li { flex: none; height: 16px; display: flex; align-items: center; gap: 9px; border-top: 1px solid #4a4a4a; color: #c4c4c4; }
.hbody li i { width: 12px; height: 10px; margin-left: 2px; border: solid #666; border-width: 0 1px 1px 0; }
.hbody li svg { width: 10px; height: 11px; }
.hbody .on { background: #6a6a6a; color: #e4e4e4; }
.hbody .on i { border: 1px solid #5c5c5c; }
.sbar { width: 11px; flex: none; display: flex; flex-direction: column; align-items: center; justify-content: space-between; background: #4a4a4a; padding: 3px 0; }
.sbar b { width: 8px; height: 12px; background: #707070; }
.sbar .c { color: #888; }
.hbody .sbar b { margin-top: 32px; }
.hfoot { height: 22px; display: flex; justify-content: flex-end; gap: 12px; padding-right: 18px; border-bottom: 3px solid #444; }
.hfoot svg { width: 10px; height: 10px; }

.dock { width: 29px; flex: none; display: flex; flex-direction: column; padding: 0 2px 0 1px; }
.dockbox { height: 29px; background: #535353; }
.dockbox .grip { margin: 3px auto 2px; }
.dockbox button { width: 19px; height: 17px; margin: 0 auto; background: #333; }
.dockbox svg { width: 12px; height: 13px; }
.dockrest { flex: 1; margin-top: 1px; background: #535353; }

.panels { width: 261px; flex: none; display: flex; flex-direction: column; gap: 3px; padding-right: 1px; }
.panels > .strip { margin-bottom: -3px; }
.adjust { flex: none; height: 98px; background: #535353; }
.abody { padding: 5px 6px; display: flex; flex-direction: column; gap: 7px; }
.abody p { line-height: 10px; color: #c8c8c8; }
.arow { width: 136px; display: flex; justify-content: center; gap: 5px; }
.props { flex: none; height: 171px; background: #535353; }
.ptitle { height: 25px; display: flex; align-items: center; gap: 5px; padding-left: 8px; border-bottom: 1px solid #4a4a4a; color: #d0d0d0; }
.boxed { display: grid; place-items: center; width: 14px; height: 15px; background: #383838; }
.boxed svg { width: 10px; height: 10px; }
.pscroll { display: flex; height: 111px; overflow: hidden; }
.pbody { flex: 1; min-width: 0; padding: 7px 0 0 6px; }
.pscroll .sbar b { flex: 1; max-height: 51px; margin: 3px 0 auto; }
.pbody input { height: 15px; }
.dimgrid { display: grid; grid-template-columns: 11px 38px 16px 12px 38px; gap: 5px 4px; align-items: center; }
.dimgrid label { text-align: right; }
.dimgrid input { width: 38px; }
.dimgrid .i { margin: 0 auto; }
.prow { display: flex; align-items: center; width: 130px; }
.strokes { margin-top: 7px; justify-content: space-between; }
.props .linebtn { width: 23px; gap: 2px; }
.props .linebtn i { width: 11px; }
.icons { margin-top: 4px; gap: 5px; }
.ib { flex: 1; height: 12px; background: #474747; border: 1px solid #5c5c5c; border-radius: 2px; justify-content: space-between; padding: 0 2px 0 5px; }
.ib svg:first-child { width: 9px; height: 9px; }
.ib.last { flex: none; width: 34px; }
.radii { margin-top: 7px; padding-left: 13px; }
.radii input { width: 100%; }
.cutrow { margin-top: 5px; gap: 4px; align-items: flex-start; }
.cutrow span { flex: 1; height: 14px; background: #454545; border: 1px solid #606060; }
.arc { width: 12px; height: 12px; border-top: 2px solid #aaa; }
.l { border-radius: 6px 0 0 0; }
.r { border-radius: 0 6px 0 0; }

.layers { flex: 1; min-height: 0; display: flex; flex-direction: column; background: #535353; }
.layers .lib { padding-right: 12px; }
.lrow { flex: none; display: flex; align-items: center; padding-left: 4px; white-space: nowrap; }
.filter { height: 24px; padding-top: 3px; border-bottom: 1px solid #484848; }
.kind { width: 59px; }
.mag { width: 8px; height: 8px; margin-left: 4px; }
.kind select { padding-left: 3px; }
.ficons { display: flex; gap: 7px; margin-left: 10px; }
.ficons svg { width: 10px; height: 10px; }
.toggle { width: 6px; height: 12px; margin-left: 11px; align-items: flex-start; background: #444; border-radius: 3px; }
.toggle::after { content: ""; flex: none; width: 6px; height: 6px; border-radius: 50%; background: #eee; }
.blend { height: 20px; gap: 5px; }
.bm { width: 81px; }
.pct { width: 37px; }
.locks { height: 22px; gap: 5px; border-top: 1px solid #4a4a4a; padding-bottom: 2px; }
.locks .ficons { gap: 6px; margin: 0; }
.lbody { flex: 1; display: flex; background: #4b4b4b; }
.lbody ul { flex: 1; }
.lbody li { display: flex; height: 28px; background: #4f4f4f; border-bottom: 1px solid #464646; }
.lbody li + li { height: 30px; }
.lbody li > button { width: 22px; background: #4f4f4f; }
.lbody li > button svg { width: 9px; height: 9px; }
.name { flex: 1; display: flex; align-items: center; gap: 4px; }
.on .name { background: #6a6a6a; }
.thumb { width: 22px; height: 26px; }
.olock { width: 9px; height: 9px; margin-left: auto; margin-right: 10px; }
.gut { width: 11px; background: #484848; }
.lfoot { position: relative; flex: none; height: 17px; display: flex; align-items: center; justify-content: flex-end; gap: 9px; padding-right: 19px; border-bottom: 1px solid #3a3a3a; }
.lfoot svg { width: 10px; height: 10px; }
.fx { font-style: italic; font-size: 10px; }
.mark { position: absolute; right: 9px; bottom: 2px; font: 16px/22px "Liberation Sans", "Noto Sans CJK SC", sans-serif; color: rgba(200, 200, 200, .5); white-space: nowrap; }

.taskbar { flex: none; height: 5px; display: flex; background: linear-gradient(90deg, #2a1c24, #22242c 25%, #232638 35%, #3e363c 48%, #232b38 65%, #20303c); }
.win { width: 242px; margin-left: 34px; background: #f2f2f2; }
.app { width: 34px; margin-left: 279px; background: #5a5e68; }
```
